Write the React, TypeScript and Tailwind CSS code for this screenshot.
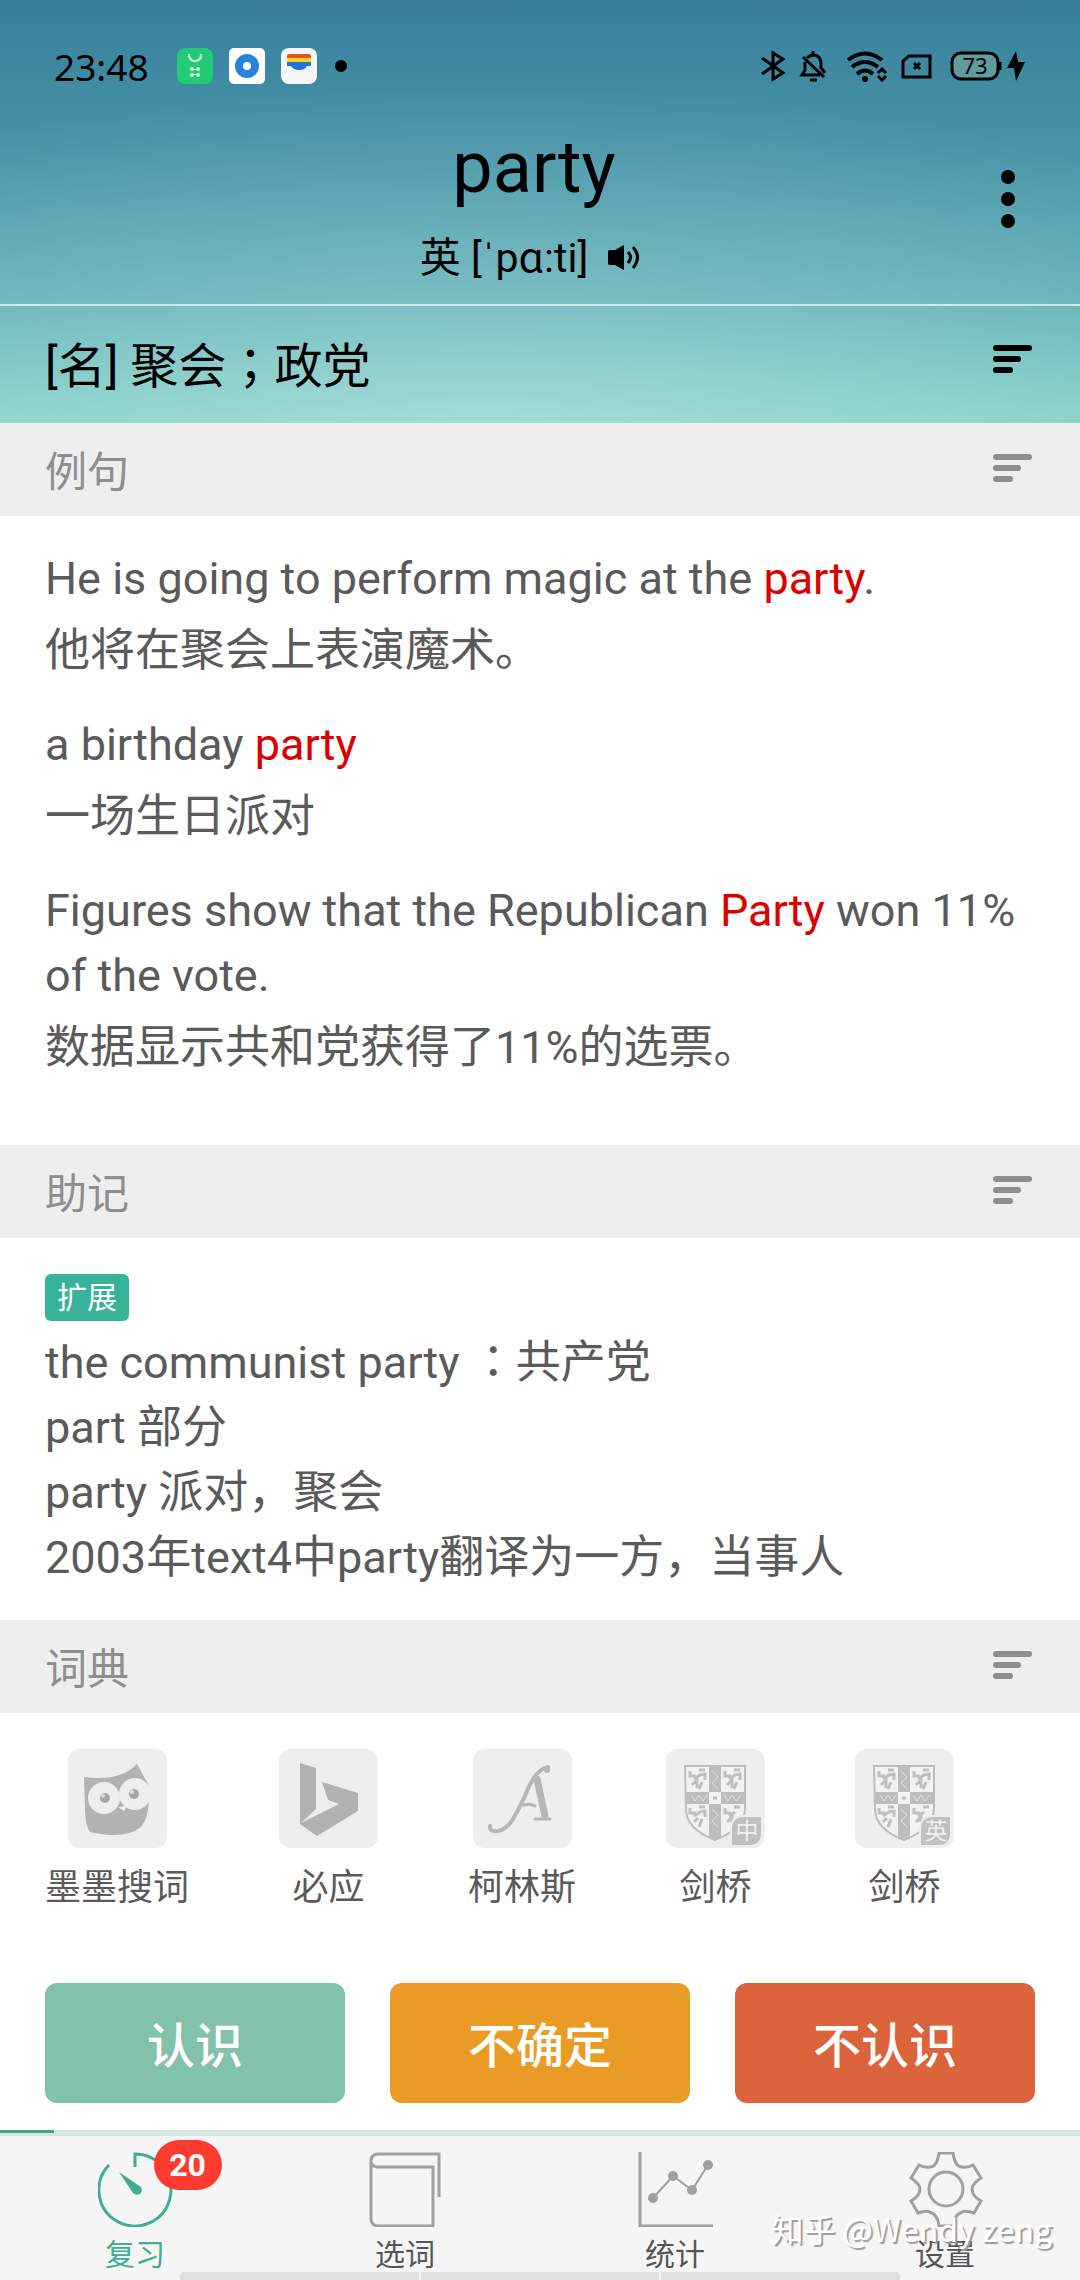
import type { ReactNode } from "react";

function SortIcon() {
  return (
    <svg width="39" height="28" viewBox="0 0 39 28" fill="none" stroke="currentColor" strokeWidth="6" strokeLinecap="round">
      <path d="M3 3H36M3 14H25M3 25H17" />
    </svg>
  );
}

function StatusIcons() {
  return (
    <svg width="266" height="32" viewBox="760 50 266 32" fill="none" stroke="black" strokeWidth="3">
      {/* bluetooth */}
      <path d="M762 58L783 73L773 79V53L783 59L762 74" />
      {/* muted bell */}
      <path d="M803 57L824 77M813 51V56M807 58Q810 55 814 55Q821 56 821 64V68L825 73M805 62V70L802 75H820" />
      <path d="M810 80H817" />
      {/* wifi */}
      <path d="M848 60Q865 47 882 60M852 67Q865 57 878 67M857 74Q865 67 873 74" strokeWidth="4" />
      <circle cx="865" cy="79" r="3" fill="black" stroke="none" />
      <path d="M878 73L882 69L886 73M878 76L882 80L886 76" strokeWidth="3" />
      {/* sim */}
      <path d="M909 56H930V77H903V61Z" />
      <path d="M914 63L920 69M920 63L914 69" />
      {/* battery */}
      <rect x="952" y="53" width="46" height="26" rx="9" fill="#5f9c9b" />
      <path d="M1000 62V70" />
      <path d="M1016 51L1007 68H1014L1016 81L1025 62H1018Z" fill="black" stroke="none" />
      <text x="975" y="74" textAnchor="middle" fontSize="22" fill="black" stroke="none" className="font-['Noto_Sans',sans-serif]">
        73
      </text>
    </svg>
  );
}

function StatusBar() {
  return (
    <div className="flex h-[132px] items-center justify-between pl-[54px] pr-[54px]">
      <div className="flex items-center gap-4">
        <span className="mr-3 font-['Noto_Sans',sans-serif] text-[37px] leading-none">23:48</span>
        <svg width="36" height="36" viewBox="0 0 36 36">
          <rect width="36" height="36" rx="8" fill="#22cc76" />
          <path d="M12 6Q12 13 18 13Q24 13 24 6" fill="none" stroke="#d9f7e6" strokeWidth="2" />
          <g fill="#d9f7e6">
            <circle cx="15" cy="21" r="2" />
            <circle cx="21" cy="21" r="2" />
            <circle cx="15" cy="27" r="2" />
            <circle cx="21" cy="27" r="2" />
            <path d="M14 21H22V22H14ZM14 26H22V27H14Z" />
          </g>
        </svg>
        <svg width="36" height="36" viewBox="0 0 36 36">
          <rect width="36" height="36" rx="5" fill="white" />
          <circle cx="18" cy="18" r="8" fill="none" stroke="#2583dc" strokeWidth="8" />
        </svg>
        <svg width="36" height="36" viewBox="0 0 36 36">
          <rect width="36" height="36" rx="8" fill="#f6f7fc" />
          <path d="M6 10V8Q6 6 8 6H28Q30 6 30 8V10Z" fill="#e0591c" />
          <path d="M6 10H30V14H6Z" fill="#ffd21f" />
          <path d="M6 14H30V18H26Q24 22 18 22Q12 22 10 18H6Z" fill="#1e73dc" />
        </svg>
        <span className="ml-[2px] size-3 rounded-full bg-black" />
      </div>
      <StatusIcons />
    </div>
  );
}

// Full-width ； and ： sit in the middle of their box here
function Centered({ children }: { children: ReactNode }) {
  return (
    <span className="font-['Noto_Sans_CJK_TC',sans-serif] leading-none" lang="zh-TW">
      {children}
    </span>
  );
}

function Section({ title, children }: { title: string; children: ReactNode }) {
  return (
    <section>
      <div className="flex h-[93px] items-center justify-between bg-[#eeeeee] pl-[45px] pr-12 text-[#8e8e8e]">
        <h2 className="pt-[6px] text-[42px] leading-none">{title}</h2>
        <button type="button" aria-label={title} className="mb-[3px]">
          <SortIcon />
        </button>
      </div>
      {children}
    </section>
  );
}

function Mark({ children }: { children: ReactNode }) {
  return <mark className="bg-transparent text-[#dc0000]">{children}</mark>;
}

function Example({ english, chinese }: { english: ReactNode; chinese: string }) {
  return (
    <div className="flex flex-col gap-[7px]">
      <p>{english}</p>
      <p>{chinese}</p>
    </div>
  );
}

function Owl() {
  return (
    <g>
      <path d="M16 28Q52 33 69 15Q75 26 80 35Q84 44 81 52Q80 70 73 78Q62 87 42 86Q30 85 22 83Q17 76 17 60Z" fill="#b2b2b2" />
      <circle cx="36" cy="49" r="16" fill="#eee" />
      <circle cx="67" cy="45" r="16" fill="#eee" />
      <path d="M50 58L59 57L56 62Z" fill="#eee" />
      <circle cx="37" cy="49" r="5" fill="#a5a5a5" />
      <circle cx="66" cy="45" r="5" fill="#a5a5a5" />
      <circle cx="35" cy="47" r="2" fill="#ddd" />
      <circle cx="64" cy="43" r="2" fill="#ddd" />
    </g>
  );
}

function Bing() {
  return <path d="M21 14L37 19V60L22 74L60 55L49 51L43 33L79 44V62L38 87L21 75Z" fill="#b2b2b2" />;
}

function Collins() {
  return (
    <g fill="none" stroke="#b6b6b6" strokeLinecap="round">
      <path d="M17 77Q16 83 25 82Q34 80 40 70Q46 60 52 47Q62 20 75 18" strokeWidth="4" />
      <path d="M64 30L72 67" strokeWidth="7" />
      <circle cx="74" cy="21" r="3" fill="#b6b6b6" stroke="none" />
      <path d="M51 56Q57 54 62 57M62 70H77" strokeWidth="3" />
    </g>
  );
}

function Crest({ label }: { label: string }) {
  return (
    <g>
      <path d="M19 17H79V60Q78 80 49 91Q20 80 20 60Z" fill="#f2f2f2" stroke="#bdbdbd" strokeWidth="2" />
      <path d="M43 17H55V88L49 91L43 88ZM20 43H79V55H20Z" fill="#bdbdbd" />
      <path d="M46 22L52 28L46 34L52 40M46 60L52 66L46 72L52 78M25 46L29 52L33 46L37 52L41 46M58 46L62 52L66 46L70 52L75 46" fill="none" stroke="#e0e0e0" strokeWidth="1" />
      <rect x="43" y="43" width="12" height="12" fill="#f2f2f2" />
      <path d="M47 49H51" stroke="#bdbdbd" strokeWidth="3" />
      <path
        d="M24 22V27H30M28 30L34 26M33 21H39M33 26L39 25V31M26 36L31 31V39M36 33L33 40M59 22V27H65M63 30L69 26M68 21H74M68 26L74 25V31M61 36L66 31V39M71 33L68 40M24 59V64H30M28 67L34 63M33 58H39M33 63L39 62V68M28 73L32 69M36 70L33 78M59 59V64H65M63 67L69 63M68 58H74M61 73L66 68V74"
        fill="none"
        stroke="#c0c0c0"
        strokeWidth="3"
      />
      <path d="M65 97V80Q65 67 78 67H96V84Q96 97 83 97Z" fill="#c0c0c0" stroke="#eee" strokeWidth="2" />
      <text x="81" y="90" textAnchor="middle" fontSize="23" fill="#f0f0f0">
        {label}
      </text>
    </g>
  );
}

const dictionaries = [
  { name: "墨墨搜词", icon: <Owl /> },
  { name: "必应", icon: <Bing /> },
  { name: "柯林斯", icon: <Collins /> },
  { name: "剑桥", icon: <Crest label="中" /> },
  { name: "剑桥", icon: <Crest label="英" /> },
];

const tabs = [
  {
    name: "复习",
    badge: 20,
    icon: (
      <g stroke="#3fae94">
        <path d="M11 13A36 36 0 1 0 37 2V15" />
        <path d="M21 20L43 35Q45 39 42 42Q38 44 35 41Z" fill="#3fae94" stroke="none" />
      </g>
    ),
  },
  {
    name: "选词",
    icon: <path d="M71 45V2H9Q3 3 3 9Q3 14 9 15H65V74H9Q4 73 3 68V9" />,
  },
  {
    name: "统计",
    icon: (
      <g>
        <path d="M2 0V74H75" />
        <path d="M15 46L35 24L54 38L70 13" strokeWidth="2" />
        <g fill="#a0a0a0" stroke="none">
          <circle cx="15" cy="46" r="5" />
          <circle cx="35" cy="24" r="5" />
          <circle cx="54" cy="38" r="5" />
          <circle cx="70" cy="13" r="5" />
        </g>
      </g>
    ),
  },
  {
    name: "设置",
    icon: (
      <g>
        <circle cx="38" cy="37" r="17" />
        <path d="M31 1H45Q47 15 54 15Q60 16 65 13L73 26Q64 32 64 37Q64 44 73 49L66 61Q58 58 54 60Q46 63 45 74H31Q30 63 22 60Q18 58 10 61L3 49Q12 44 12 37Q12 32 3 26L11 13Q16 16 22 15Q29 15 31 1Z" />
      </g>
    ),
  },
];

function TabBar() {
  return (
    <footer className="relative bg-[#f5f5f5]">
      <div className="h-[6px] bg-[#d9e7e3]">
        <div className="h-[3px] w-1/20 bg-[#45a28e]" />
      </div>
      <nav className="grid h-[144px] grid-cols-4">
        {tabs.map((tab) => (
          <a
            key={tab.name}
            href="#"
            className={`flex flex-col items-center gap-3 pt-4 text-[30px] leading-8 ${tab.badge ? "text-[#3fae94]" : "text-[#555555]"}`}
          >
            <span className="relative">
              <svg width="75" height="75" viewBox="0 0 75 75" fill="none" stroke="#a0a0a0" strokeWidth="3">
                {tab.icon}
              </svg>
              {tab.badge && (
                <span className="absolute -top-3 left-14 flex h-[50px] w-[68px] items-center justify-center rounded-full bg-[#fd3a30] text-[32px] font-bold text-white">
                  {tab.badge}
                </span>
              )}
            </span>
            {tab.name}
          </a>
        ))}
      </nav>
      <div className="absolute bottom-0 left-1/6 flex h-2 w-2/3 gap-[2px] overflow-hidden rounded-t">
        <span className="flex-1 bg-[#e1e1e0]" />
        <span className="flex-1 bg-[#e1e1e0]" />
        <span className="flex-1 bg-[#e1e1e0]" />
      </div>
      <p className="absolute right-7 top-[74px] font-['Noto_Sans_CJK_SC',sans-serif] text-[32px] leading-[48px] text-white [text-shadow:2px_2px_1px_#9a9a9a]">
        知乎 @Wendy zeng
      </p>
    </footer>
  );
}

export default function App() {
  return (
    <main className="flex min-h-screen flex-col bg-[#fefefe] font-['Roboto','Noto_Sans_CJK_SC',sans-serif] text-black" lang="zh-CN">
      <header className="bg-[radial-gradient(ellipse_90%_80%_at_45%_100%,#ffffff48,transparent),linear-gradient(#377f9b,#4795a8_35%,#5eafb6_70%,#80d0c6)]">
        <StatusBar />
        <div className="flex h-[172px] items-start pl-[67px] pr-[65px]">
          <div className="flex flex-1 flex-col items-center">
            <h1 className="text-[72px] leading-[72px]">party</h1>
            <div className="mt-[22px] flex items-center gap-5 pr-2 text-[41px] leading-[64px]">
              <span>英 [ˈpɑ:ti]</span>
              <button type="button" aria-label="英">
                <svg width="32" height="26" viewBox="0 0 32 26">
                  <path d="M0 7Q0 5 2 5H7L16 0V25L7 20H2Q0 20 0 18Z" />
                  <path d="M20 7Q25 12 20 18M25 2Q34 12 25 23" fill="none" stroke="black" strokeWidth="3" />
                </svg>
              </button>
            </div>
          </div>
          <button type="button" aria-label="party" className="mt-[38px] flex flex-col gap-2">
            <span className="size-[14px] rounded-full bg-black" />
            <span className="size-[14px] rounded-full bg-black" />
            <span className="size-[14px] rounded-full bg-black" />
          </button>
        </div>
        <div className="flex h-[119px] items-center justify-between border-t-2 border-[#cfe8ee] pl-[45px] pr-12">
          <p className="text-[48px] leading-none">
            [名] 聚会<Centered>；</Centered>政党
          </p>
          <button type="button" aria-label="[名]" className="mb-3">
            <SortIcon />
          </button>
        </div>
      </header>

      <Section title="例句">
        <div className="flex flex-col gap-[29px] px-[45px] pb-[65px] pt-[30px] text-[45px] leading-[65px] text-[#5a5a5a]">
          <Example english={<>He is going to perform magic at the <Mark>party</Mark>.</>} chinese="他将在聚会上表演魔术。" />
          <Example english={<>a birthday <Mark>party</Mark></>} chinese="一场生日派对" />
          <Example
            english={<>Figures show that the Republican <Mark>Party</Mark> won 11% of the vote.</>}
            chinese="数据显示共和党获得了11%的选票。"
          />
        </div>
      </Section>

      <Section title="助记">
        <div className="px-[45px] pb-[30px] pt-9 text-[45px] leading-[65px] text-[#5a5a5a]">
          <span className="mb-[9px] flex h-[47px] w-[84px] items-center justify-center rounded-md bg-[#36b398] text-[30px] text-white">扩展</span>
          <p>
            the communist party <Centered>：</Centered>共产党
          </p>
          <p>part 部分</p>
          <p>party 派对，聚会</p>
          <p>2003年text4中party翻译为一方，当事人</p>
        </div>
      </Section>

      <Section title="词典">
        <div className="flex gap-[90px] px-[45px] pt-9">
          {dictionaries.map((dictionary, i) => (
            <button key={i} type="button" className="flex flex-col items-center gap-[18px] text-[36px] leading-[44px] text-[#5a5a5a]">
              <svg width="99" height="99" viewBox="0 0 99 99">
                <rect width="99" height="99" rx="12" fill="#eeeeee" />
                {dictionary.icon}
              </svg>
              {dictionary.name}
            </button>
          ))}
        </div>
      </Section>

      <div className="mt-auto grid grid-cols-3 gap-[45px] px-[45px] pb-[27px] pt-8 text-[48px] font-medium text-white">
        <button type="button" className="h-[120px] rounded-xl bg-[#82c1aa] pt-2">认识</button>
        <button type="button" className="h-[120px] rounded-xl bg-[#e99b26] pt-2">不确定</button>
        <button type="button" className="h-[120px] rounded-xl bg-[#db643c] pt-2">不认识</button>
      </div>
      <TabBar />
    </main>
  );
}
